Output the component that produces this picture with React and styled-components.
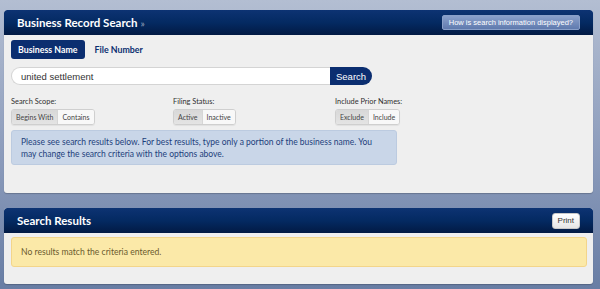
import React, { useState } from 'react'
import styled, { createGlobalStyle } from 'styled-components'

const GlobalStyle = createGlobalStyle`
  html, body {
    margin: 0;
    height: 100%;
  }
  body {
    background: linear-gradient(180deg, #b3bed2 0%, #8b9bbb 55%, #687da4 100%);
    font-family: Lato, "Noto Sans", sans-serif;
  }
`

const Page = styled.div`
  display: flex;
  flex-direction: column;
  gap: 15px;
  padding: 10px 7px 6px 4px;
`

const Panel = styled.section`
  background: #efefef;
  border-radius: 3px;
  box-shadow: 0 1px 1px rgba(0, 0, 0, 0.2);
  overflow: hidden;
`

const Header = styled.div`
  display: flex;
  align-items: center;
  justify-content: space-between;
  height: 25px;
  padding: 0 13px 0 13px;
  background: linear-gradient(180deg, #0d3373 0%, #042a62 50%, #021a44 100%);
  border-radius: 3px 3px 0 0;
`

const Title = styled.h1`
  margin: 0;
  font-size: 11.5px;
  font-weight: 700;
  color: #fff;

  span {
    color: #9aa6bd;
    font-weight: 400;
    font-size: 10px;
    margin-left: 3px;
  }
`

const HelpButton = styled.button`
  height: 15px;
  padding: 0 6px;
  border: 1px solid #8aa0c9;
  border-radius: 2px;
  background: linear-gradient(180deg, #8aa0cb 0%, #5f7aae 100%);
  color: #fff;
  font-family: "Liberation Sans", Arial, sans-serif;
  font-size: 7.5px;
`

const PrintButton = styled.button`
  height: 16px;
  padding: 0 5px;
  border: 1px solid #c8c8c8;
  border-radius: 3px;
  background: linear-gradient(180deg, #ffffff 0%, #e6e6e6 100%);
  color: #333;
  font-family: "Liberation Sans", Arial, sans-serif;
  font-size: 8px;
`

const Body = styled.div`
  display: flex;
  flex-direction: column;
  padding: ${(p) => p.$pad || '5px 7px 28px 7px'};
`

const Tabs = styled.div`
  display: flex;
  align-items: center;
  gap: 3px;
`

const Tab = styled.button`
  height: 19px;
  padding: 0 7px;
  border: none;
  border-radius: 3px;
  background: ${(p) => (p.$active ? '#0b2e70' : 'transparent')};
  color: ${(p) => (p.$active ? '#fff' : '#0b2e70')};
  font-family: Lato, sans-serif;
  font-weight: 700;
  font-size: 8.8px;
`

const SearchRow = styled.form`
  display: flex;
  margin-top: 8px;
`

const SearchInput = styled.input`
  width: 319px;
  box-sizing: border-box;
  height: 18px;
  padding: 0 9px;
  border: 1px solid #d4d4d4;
  border-right: none;
  border-radius: 9px 0 0 9px;
  background: #fff;
  color: #333;
  font-family: "Liberation Sans", Arial, sans-serif;
  font-size: 9.5px;
  outline: none;
`

const SearchButton = styled.button`
  height: 18px;
  width: 42px;
  border: none;
  border-radius: 0 9px 9px 0;
  background: #0b2e70;
  color: #fff;
  font-family: "Liberation Sans", Arial, sans-serif;
  font-size: 9.5px;
  text-align: left;
  padding: 0 0 0 6px;
`

const Filters = styled.div`
  display: grid;
  grid-template-columns: 162px 162px auto;
  margin-top: 12px;
`

const Filter = styled.div`
  display: flex;
  flex-direction: column;
  align-items: flex-start;
  gap: 3px;
`

const Label = styled.div`
  font-size: 7.4px;
  color: #2f2f2f;
`

const Group = styled.div`
  display: flex;
  border: 1px solid #cfcfcf;
  border-radius: 3px;
  overflow: hidden;
  box-shadow: 0 1px 1px rgba(0, 0, 0, 0.06);
`

const GroupButton = styled.button`
  height: 14px;
  padding: 0 4px;
  border: none;
  border-left: ${(p) => (p.$first ? 'none' : '1px solid #d6d6d6')};
  background: ${(p) => (p.$active ? 'linear-gradient(180deg, #d8d8d8, #e4e4e4)' : '#f8f8f8')};
  color: #444;
  font-family: Lato, sans-serif;
  font-size: 7px;
`

const Info = styled.div`
  width: 386px;
  box-sizing: border-box;
  margin-top: 5px;
  padding: 5px 20px 4px 9px;
  background: #c9d6e8;
  border: 1px solid #bccbe0;
  border-radius: 3px;
  color: #1d3f7c;
  font-size: 8.5px;
  line-height: 12px;
`

const Alert = styled.div`
  box-sizing: border-box;
  height: 30px;
  display: flex;
  align-items: center;
  padding: 0 9px;
  background: #fbe9a8;
  border: 1px solid #f3d58a;
  border-radius: 3px;
  color: #6b5b2e;
  font-size: 8.6px;
`

const options = [
  { label: 'Search Scope:', items: ['Begins With', 'Contains'] },
  { label: 'Filing Status:', items: ['Active', 'Inactive'] },
  { label: 'Include Prior Names:', items: ['Exclude', 'Include'] },
]

export default function App() {
  const [tab, setTab] = useState('name')
  const [query, setQuery] = useState('united settlement')
  const [picked, setPicked] = useState([0, 0, 0])

  return (
    <>
      <GlobalStyle />
      <Page>
        <Panel>
          <Header>
            <Title>Business Record Search<span>»</span></Title>
            <HelpButton type="button">How is search information displayed?</HelpButton>
          </Header>
          <Body>
            <Tabs>
              <Tab $active={tab === 'name'} onClick={() => setTab('name')}>Business Name</Tab>
              <Tab $active={tab === 'file'} onClick={() => setTab('file')}>File Number</Tab>
            </Tabs>
            <SearchRow onSubmit={(e) => e.preventDefault()}>
              <SearchInput value={query} onChange={(e) => setQuery(e.target.value)} />
              <SearchButton type="submit">Search</SearchButton>
            </SearchRow>
            <Filters>
              {options.map((opt, i) => (
                <Filter key={opt.label}>
                  <Label>{opt.label}</Label>
                  <Group>
                    {opt.items.map((item, j) => (
                      <GroupButton
                        key={item}
                        $first={j === 0}
                        $active={picked[i] === j}
                        onClick={() => setPicked(picked.map((v, k) => (k === i ? j : v)))}
                      >
                        {item}
                      </GroupButton>
                    ))}
                  </Group>
                </Filter>
              ))}
            </Filters>
            <Info>
              Please see search results below. For best results, type only a portion of the business name. You
              may change the search criteria with the options above.
            </Info>
          </Body>
        </Panel>
        <Panel>
          <Header>
            <Title>Search Results</Title>
            <PrintButton type="button">Print</PrintButton>
          </Header>
          <Body $pad="4px 6px 17px 7px">
            <Alert>No results match the criteria entered.</Alert>
          </Body>
        </Panel>
      </Page>
    </>
  )
}
